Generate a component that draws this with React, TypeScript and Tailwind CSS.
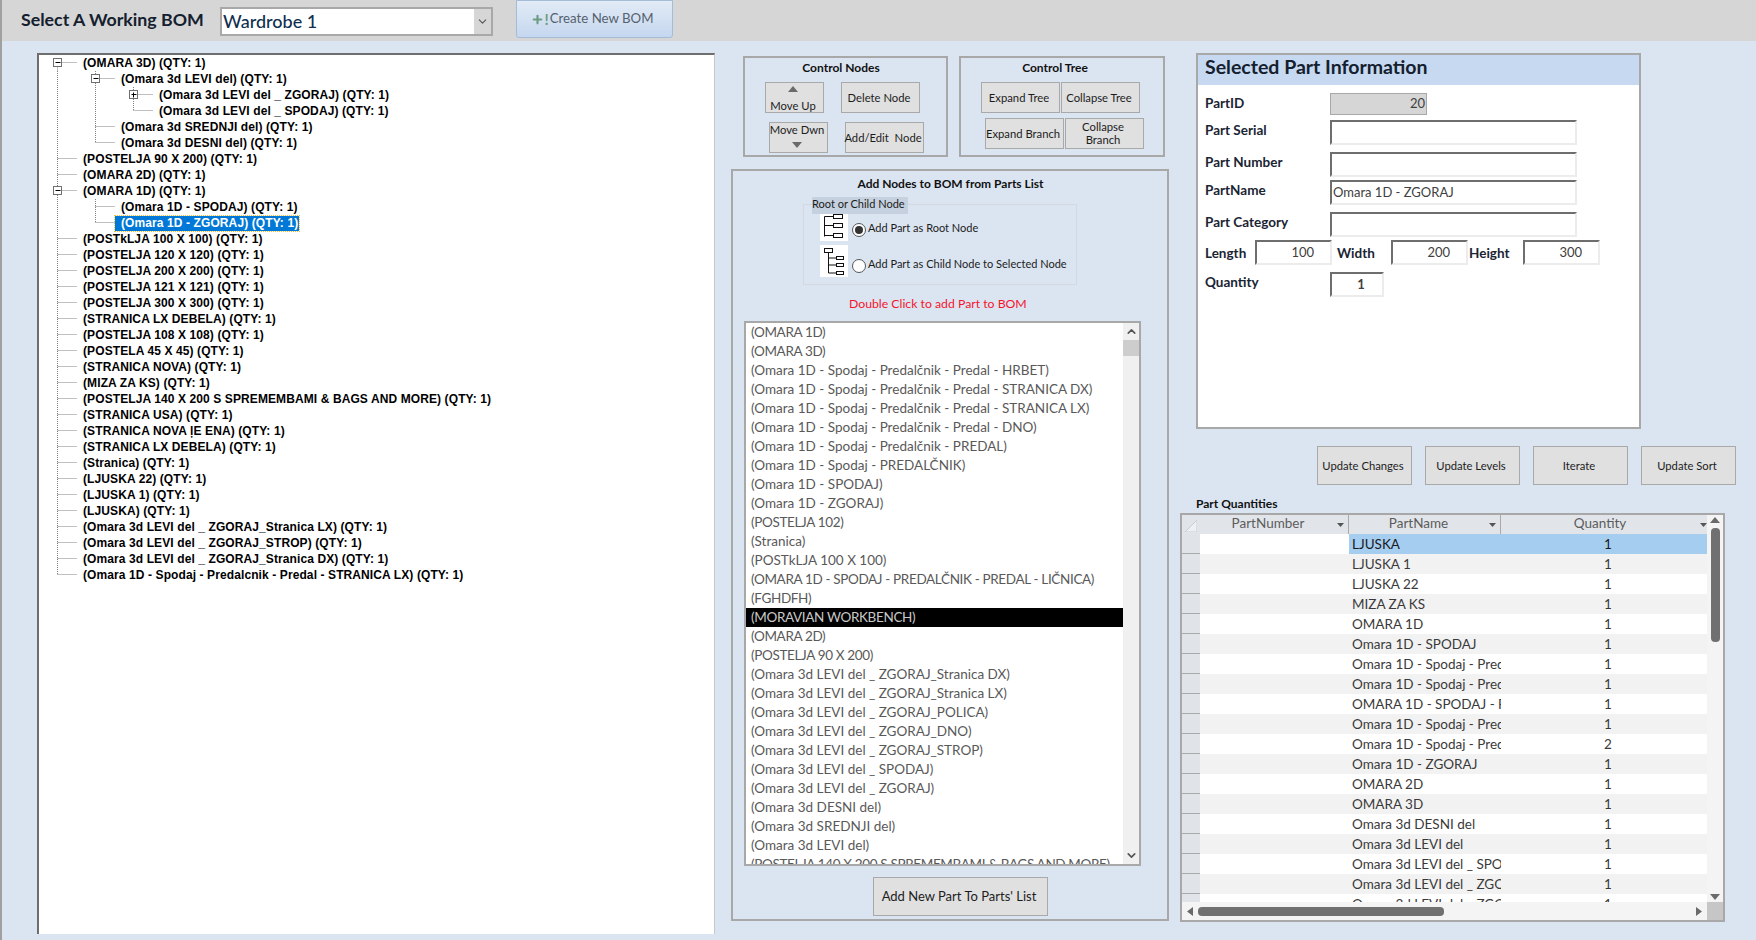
import { ChevronDown, ChevronUp, Plus } from 'lucide-react';
import type { ReactNode } from 'react';

type Guide = 'f' | 'u' | 'd' | null;
interface TreeRow {
    level: number;
    text: string;
    box?: 'minus' | 'plus';
    guides: Guide[];
    selected?: boolean;
}

const flat = (text: string, g: Guide = 'f'): TreeRow => ({ level: 0, text, guides: [g] });

const treeRows: TreeRow[] = [
    { level: 0, text: '(OMARA 3D) (QTY: 1)', box: 'minus', guides: ['d'] },
    { level: 1, text: '(Omara 3d LEVI del) (QTY: 1)', box: 'minus', guides: ['f', 'f'] },
    { level: 2, text: '(Omara 3d LEVI del _ ZGORAJ) (QTY: 1)', box: 'plus', guides: ['f', 'f', 'f'] },
    { level: 2, text: '(Omara 3d LEVI del _ SPODAJ) (QTY: 1)', guides: ['f', 'f', 'u'] },
    { level: 1, text: '(Omara 3d SREDNJI del) (QTY: 1)', guides: ['f', 'f'] },
    { level: 1, text: '(Omara 3d DESNI del) (QTY: 1)', guides: ['f', 'u'] },
    flat('(POSTELJA 90 X 200) (QTY: 1)'),
    flat('(OMARA 2D) (QTY: 1)'),
    { level: 0, text: '(OMARA 1D) (QTY: 1)', box: 'minus', guides: ['f'] },
    { level: 1, text: '(Omara 1D - SPODAJ) (QTY: 1)', guides: ['f', 'f'] },
    { level: 1, text: '(Omara 1D - ZGORAJ) (QTY: 1)', guides: ['f', 'u'], selected: true },
    flat('(POSTkLJA 100 X 100) (QTY: 1)'),
    flat('(POSTELJA 120 X 120) (QTY: 1)'),
    flat('(POSTELJA 200 X 200) (QTY: 1)'),
    flat('(POSTELJA 121 X 121) (QTY: 1)'),
    flat('(POSTELJA 300 X 300) (QTY: 1)'),
    flat('(STRANICA LX DEBELA) (QTY: 1)'),
    flat('(POSTELJA 108 X 108) (QTY: 1)'),
    flat('(POSTELA 45 X 45) (QTY: 1)'),
    flat('(STRANICA NOVA) (QTY: 1)'),
    flat('(MIZA ZA KS) (QTY: 1)'),
    flat('(POSTELJA 140 X 200 S SPREMEMBAMI & BAGS AND MORE) (QTY: 1)'),
    flat('(STRANICA USA) (QTY: 1)'),
    flat('(STRANICA NOVA ļE ENA) (QTY: 1)'),
    flat('(STRANICA LX DEBELA) (QTY: 1)'),
    flat('(Stranica) (QTY: 1)'),
    flat('(LJUSKA 22) (QTY: 1)'),
    flat('(LJUSKA 1) (QTY: 1)'),
    flat('(LJUSKA) (QTY: 1)'),
    flat('(Omara 3d LEVI del _ ZGORAJ_Stranica LX) (QTY: 1)'),
    flat('(Omara 3d LEVI del _ ZGORAJ_STROP) (QTY: 1)'),
    flat('(Omara 3d LEVI del _ ZGORAJ_Stranica DX) (QTY: 1)'),
    flat('(Omara 1D - Spodaj - Predalcnik - Predal - STRANICA LX) (QTY: 1)', 'u'),
];

const listItems = [
    '(OMARA 1D)',
    '(OMARA 3D)',
    '(Omara 1D - Spodaj - Predalčnik - Predal - HRBET)',
    '(Omara 1D - Spodaj - Predalčnik - Predal - STRANICA DX)',
    '(Omara 1D - Spodaj - Predalčnik - Predal - STRANICA LX)',
    '(Omara 1D - Spodaj - Predalčnik - Predal - DNO)',
    '(Omara 1D - Spodaj - Predalčnik - PREDAL)',
    '(Omara 1D - Spodaj - PREDALČNIK)',
    '(Omara 1D - SPODAJ)',
    '(Omara 1D - ZGORAJ)',
    '(POSTELJA 102)',
    '(Stranica)',
    '(POSTkLJA 100 X 100)',
    '(OMARA 1D - SPODAJ - PREDALČNIK - PREDAL - LIČNICA)',
    '(FGHDFH)',
    '(MORAVIAN WORKBENCH)',
    '(OMARA 2D)',
    '(POSTELJA 90 X 200)',
    '(Omara 3d LEVI del _ ZGORAJ_Stranica DX)',
    '(Omara 3d LEVI del _ ZGORAJ_Stranica LX)',
    '(Omara 3d LEVI del _ ZGORAJ_POLICA)',
    '(Omara 3d LEVI del _ ZGORAJ_DNO)',
    '(Omara 3d LEVI del _ ZGORAJ_STROP)',
    '(Omara 3d LEVI del _ SPODAJ)',
    '(Omara 3d LEVI del _ ZGORAJ)',
    '(Omara 3d DESNI del)',
    '(Omara 3d SREDNJI del)',
    '(Omara 3d LEVI del)',
    '(POSTELJA 140 X 200 S SPREMEMBAMI & BAGS AND MORE)',
];

const quantities: [string, number][] = [
    ['LJUSKA', 1],
    ['LJUSKA 1', 1],
    ['LJUSKA 22', 1],
    ['MIZA ZA KS', 1],
    ['OMARA 1D', 1],
    ['Omara 1D - SPODAJ', 1],
    ['Omara 1D - Spodaj - Predalčnik', 1],
    ['Omara 1D - Spodaj - Predalčnik', 1],
    ['OMARA 1D - SPODAJ - PREDALČNIK', 1],
    ['Omara 1D - Spodaj - Predalčnik', 1],
    ['Omara 1D - Spodaj - Predalčnik', 2],
    ['Omara 1D - ZGORAJ', 1],
    ['OMARA 2D', 1],
    ['OMARA 3D', 1],
    ['Omara 3d DESNI del', 1],
    ['Omara 3d LEVI del', 1],
    ['Omara 3d LEVI del _ SPODAJ', 1],
    ['Omara 3d LEVI del _ ZGORAJ', 1],
    ['Omara 3d LEVI del _ ZGORAJ', 1],
];

// connector drawing in front of a tree row
function TreePrefix({ row }: { row: TreeRow }) {
    const width = (row.level + 1) * 38;
    const cx = (i: number) => 18.5 + i * 38;
    const midY = 7.5;
    const own = cx(row.level);
    return (
        <svg width={width} height={16} className="shrink-0">
            {row.guides.map((g, i) => {
                if (!g) return null;
                const y1 = g === 'd' ? midY : 0;
                const y2 = g === 'u' ? midY : 16;
                return <line key={i} x1={cx(i)} x2={cx(i)} y1={y1} y2={y2} stroke="#808080" strokeDasharray="1 1" />;
            })}
            <line x1={own} x2={width} y1={midY} y2={midY} stroke="#808080" strokeDasharray="1 1" />
            {row.box && (
                <g>
                    <rect x={own - 4} y={midY - 4} width={8} height={8} fill="#fff" stroke="#707070" />
                    <line x1={own - 2} x2={own + 3} y1={midY} y2={midY} stroke="#000" />
                    {row.box === 'plus' && <line x1={own} x2={own} y1={midY - 2} y2={midY + 3} stroke="#000" />}
                </g>
            )}
        </svg>
    );
}

function GrayButton({ className, children }: { className: string; children: ReactNode }) {
    return (
        <button className={`bg-[#e0e0e0] border border-[#a9a9a9] text-[#1c1c1c] text-[11.25px] leading-[13px] whitespace-nowrap font-[Lato,sans-serif] flex flex-col items-center justify-center shrink-0 pr-[3px] ${className}`}>
            {children}
        </button>
    );
}

function Triangle({ down }: { down?: boolean }) {
    return (
        <svg width="10" height="6" viewBox="0 0 10 6" className="shrink-0">
            <path d={down ? 'M0 0H10L5 6Z' : 'M0 6H10L5 0Z'} fill="#6a6a6a" />
        </svg>
    );
}

function GroupBox({ className, children }: { className: string; children: ReactNode }) {
    return <div className={`border-2 border-[#a8a8a8] flex flex-col shrink-0 ${className}`}>{children}</div>;
}

function Field({ className, value, right }: { className: string; value?: string; right?: boolean }) {
    return (
        <div className={`border-2 border-t-[#6e6e6e] border-l-[#6e6e6e] border-r-[#ececec] border-b-[#ececec] bg-white text-[13px] text-[#404040] flex items-center shrink-0 ${right ? 'justify-end pr-[16px] pb-[2px]' : 'pl-[1px]'} ${className}`}>
            {value}
        </div>
    );
}

function PartRow({ label, className, value }: { label: string; className: string; value?: string }) {
    return (
        <div className={`flex items-center ${className}`}>
            <span className="w-[125px] text-[13.5px] leading-[16px] font-bold text-[#1a2433] mb-[5px]">{label}</span>
            <Field className="w-[247px] h-[25px]" value={value} />
        </div>
    );
}

function Header({ className, arrow, label }: { className: string; arrow: string; label: string }) {
    return (
        <div className={`relative flex items-center justify-center border-r border-[#a9a9a9] text-[13.5px] text-[#5c5c5c] shrink-0 pb-[2px] ${className}`}>
            {label}
            <svg width="7" height="4" viewBox="0 0 7 4" className={`absolute top-[8px] ${arrow}`}>
                <path d="M0 0H7L3.5 4Z" fill="#555" />
            </svg>
        </div>
    );
}

function RootIcon() {
    return (
        <svg width="28" height="32" viewBox="0 0 28 32" className="bg-white shrink-0">
            <g fill="none" stroke="#111" strokeWidth="1">
                <rect x="13.5" y="5.5" width="9" height="4" />
                <rect x="13.5" y="14.5" width="9" height="4" />
                <rect x="13.5" y="24.5" width="9" height="4" />
                <path d="M4.5 7.5V27.5M4.5 7.5H13M4.5 16.5H13M4.5 26.5H13" />
            </g>
        </svg>
    );
}

function ChildIcon() {
    return (
        <svg width="28" height="32" viewBox="0 0 28 32" className="bg-white shrink-0">
            <g fill="none" stroke="#111" strokeWidth="1">
                <rect x="4.5" y="3.5" width="8" height="4" />
                <rect x="16.5" y="11.5" width="7" height="3" />
                <rect x="16.5" y="18.5" width="7" height="3" />
                <rect x="16.5" y="26.5" width="7" height="3" />
                <path d="M8.5 8V28M8.5 13H16M8.5 20H16M8.5 28H16" />
            </g>
        </svg>
    );
}

export default function App() {
    return (
        <div className="w-[1756px] h-[940px] overflow-hidden bg-[#dbe5f1] border-l-2 border-[#a0a0a0] flex flex-col font-[Lato,sans-serif]">
            {/* top bar */}
            <div className="h-[41px] bg-[#d6d6d6] flex items-start shrink-0">
                <div className="ml-[19px] mt-[7px] w-[179px] text-[17.75px] leading-[24px] font-bold text-[#14202e] whitespace-nowrap">Select A Working BOM</div>
                <div className="ml-[20px] mt-[7px] w-[273px] h-[29px] border-2 border-[#a8a8a8] bg-white flex items-center">
                    <span className="flex-1 pl-[1px] text-[18px] font-medium text-[#10304f]">Wardrobe 1</span>
                    <div className="w-[17px] h-full bg-[#d6d6d6] flex items-center justify-center">
                        <ChevronDown size={13} className="text-[#555]" />
                    </div>
                </div>
                <button className="ml-[23px] w-[157px] h-[38px] rounded-b-[3px] border border-[#a4bcd8] bg-gradient-to-b from-[#e2ebf6] to-[#c5d7ef] flex items-center justify-center text-[13.25px] text-[#56616e] pr-[4px]">
                    <Plus size={13} strokeWidth={4} className="text-[#6d9c82]" />
                    <span className="font-bold text-[#6d9c82] text-[15px] leading-none mr-[1px]">!</span>
                    Create New BOM
                </button>
            </div>

            <div className="flex flex-1 min-h-0">
                {/* tree */}
                <div className="ml-[35px] mt-[12px] w-[678px] h-[881px] shrink-0 bg-white border-t-2 border-l-2 border-[#6e6e6e] border-r border-r-[#c8c8c8] font-['Liberation_Sans',sans-serif] font-bold text-[12px] text-black">
                    {treeRows.map((row, i) => (
                        <div key={i} className="flex items-center h-[16px] whitespace-nowrap">
                            <TreePrefix row={row} />
                            <span className={`pl-[6px] pr-[1px] leading-[15px] tracking-[0.1px] ${row.selected ? 'bg-[#0078d7] text-white outline-1 outline-dotted outline-[#f0c040]' : ''}`}>{row.text}</span>
                        </div>
                    ))}
                </div>

                {/* middle column */}
                <div className="ml-[16px] w-[438px] shrink-0 flex flex-col">
                    <div className="flex mt-[15px] ml-[12px] gap-[11px]">
                        <GroupBox className="w-[205px] h-[101px]">
                            <div className="h-[20px] flex items-center justify-center text-[12px] font-bold text-[#111] pr-[9px]">Control Nodes</div>
                            <div className="flex mt-[4px] ml-[20px] gap-[17px]">
                                <GrayButton className="w-[59px] h-[31px] !justify-between pt-[3px]">
                                    <Triangle />
                                    <span>Move Up</span>
                                </GrayButton>
                                <GrayButton className="w-[79px] h-[31px]">Delete Node</GrayButton>
                            </div>
                            <div className="flex mt-[9px] ml-[24px] gap-[17px]">
                                <GrayButton className="w-[59px] h-[31px] !justify-between pb-[4px]">
                                    <span>Move Dwn</span>
                                    <Triangle down />
                                </GrayButton>
                                <GrayButton className="w-[79px] h-[31px]">Add/Edit&nbsp; Node</GrayButton>
                            </div>
                        </GroupBox>
                        <GroupBox className="w-[206px] h-[101px]">
                            <div className="h-[20px] flex items-center justify-center text-[12px] font-bold text-[#111] pr-[14px]">Control Tree</div>
                            <div className="flex mt-[4px] ml-[20px] gap-[1px]">
                                <GrayButton className="w-[79px] h-[31px]">Expand Tree</GrayButton>
                                <GrayButton className="w-[79px] h-[31px]">Collapse Tree</GrayButton>
                            </div>
                            <div className="flex mt-[5px] ml-[24px] gap-[1px]">
                                <GrayButton className="w-[79px] h-[31px]">Expand Branch</GrayButton>
                                <GrayButton className="w-[79px] h-[31px] pb-[2px]">
                                    <span>Collapse</span>
                                    <span>Branch</span>
                                </GrayButton>
                            </div>
                        </GroupBox>
                    </div>

                    <GroupBox className="mt-[12px] w-[438px] h-[752px]">
                        <div className="h-[26px] flex items-center justify-center text-[12px] font-bold text-[#111] pl-[1px]">Add Nodes to BOM from Parts List</div>
                        <div className="relative mt-[7px] ml-[70px] w-[274px] h-[81px] border border-[#d3d9df] px-[16px] py-[4px] flex flex-col gap-[4px] text-[11px] text-[#1c1c1c]">
                            <div className="absolute left-[8px] -top-[8px] w-[96px] h-[17px] bg-[#c5d1de] flex items-center whitespace-nowrap pb-[2px]">Root or Child Node</div>
                            <div className="flex">
                                <RootIcon />
                                <div className="ml-[4px] flex items-center gap-[2px] h-[32px] pt-[6px] whitespace-nowrap">
                                    <span className="w-[14px] h-[14px] rounded-full border border-[#555] bg-white flex items-center justify-center mt-[3px]">
                                        <span className="w-[8px] h-[8px] rounded-full bg-[#333]" />
                                    </span>
                                    Add Part as Root Node
                                </div>
                            </div>
                            <div className="flex">
                                <ChildIcon />
                                <div className="ml-[4px] flex items-center gap-[2px] h-[32px] pt-[6px] whitespace-nowrap">
                                    <span className="w-[14px] h-[14px] rounded-full border border-[#555] bg-white mt-[3px]" />
                                    Add Part as Child Node to Selected Node
                                </div>
                            </div>
                        </div>
                        <div className="mt-[10px] ml-[116px] h-[19px] flex items-center text-[12.25px] text-[#f5142d]">Double Click to add Part to BOM</div>
                        <div className="mt-[7px] ml-[11px] w-[397px] h-[545px] border-2 border-[#a8a8a8] bg-white flex overflow-hidden">
                            <div className="w-[377px] overflow-hidden">
                                {listItems.map((item, i) => (
                                    <div key={i} className={`h-[19px] pl-[5px] flex items-center whitespace-nowrap text-[13.5px] ${item === item.toUpperCase() ? 'tracking-[-0.35px]' : ''} ${item.startsWith('(MORAVIAN') ? 'bg-black text-[#c8c8c8]' : 'text-[#595959]'}`}>
                                        {item}
                                    </div>
                                ))}
                            </div>
                            <div className="w-[16px] bg-[#f0f0f0] flex flex-col items-center justify-between py-[2px]">
                                <div className="flex flex-col items-center w-full">
                                    <ChevronUp size={13} strokeWidth={3} className="text-[#555]" />
                                    <div className="w-full h-[16px] mt-[2px] bg-[#cdcdcd]" />
                                </div>
                                <ChevronDown size={13} strokeWidth={3} className="text-[#555]" />
                            </div>
                        </div>
                        <GrayButton className="mt-[11px] ml-[140px] w-[175px] h-[39px] !text-[13px]">Add New Part To Parts' List</GrayButton>
                    </GroupBox>
                </div>

                {/* right column */}
                <div className="ml-[11px] w-[556px] shrink-0 flex flex-col">
                    <div className="mt-[12px] ml-[16px] w-[445px] h-[376px] shrink-0 border-2 border-[#a8a8a8] bg-white flex flex-col">
                        <div className="h-[30px] bg-[#c6d9f1] flex items-center pl-[7px] pb-[6px] text-[19.5px] font-bold text-[#14202e] shrink-0">Selected Part Information</div>
                        <div className="pl-[7px] flex flex-col">
                            <div className="flex items-center mt-[8px]">
                                <span className="w-[125px] text-[13.5px] leading-[16px] font-bold text-[#1a2433] mb-[2px]">PartID</span>
                                <div className="w-[97px] h-[22px] bg-[#d6d6d6] border border-[#a8a8a8] text-[13px] text-[#404040] flex items-center justify-end pr-[1px]">20</div>
                            </div>
                            <PartRow label="Part Serial" className="mt-[5px]" />
                            <PartRow label="Part Number" className="mt-[7px]" />
                            <PartRow label="PartName" className="mt-[3px]" value="Omara 1D - ZGORAJ" />
                            <PartRow label="Part Category" className="mt-[7px]" />
                            <div className="flex items-center mt-[3px] text-[13.5px] leading-[16px] font-bold text-[#1a2433]">
                                <span className="w-[50px]">Length</span>
                                <Field className="w-[77px] h-[25px] font-normal" value="100" right />
                                <span className="w-[54px] ml-[5px]">Width</span>
                                <Field className="w-[77px] h-[25px] font-normal" value="200" right />
                                <span className="w-[54px] ml-[1px]">Height</span>
                                <Field className="w-[77px] h-[25px] font-normal" value="300" right />
                            </div>
                            <div className="flex items-center mt-[7px]">
                                <span className="w-[125px] text-[13.5px] leading-[16px] font-bold text-[#1a2433] mb-[5px]">Quantity</span>
                                <Field className="w-[54px] h-[25px] justify-center font-bold !pl-[8px]" value="1" />
                            </div>
                        </div>
                    </div>

                    <div className="flex mt-[17px] ml-[137px] gap-[13px]">
                        <GrayButton className="w-[95px] h-[39px]">Update Changes</GrayButton>
                        <GrayButton className="w-[95px] h-[39px]">Update Levels</GrayButton>
                        <GrayButton className="w-[95px] h-[39px]">Iterate</GrayButton>
                        <GrayButton className="w-[95px] h-[39px]">Update Sort</GrayButton>
                    </div>

                    <div className="mt-[11px] ml-[16px] h-[16px] flex items-center text-[12px] font-bold text-[#111]">Part Quantities</div>

                    <div className="mt-[1px] w-[545px] h-[409px] border-2 border-[#a8a8a8] bg-white flex flex-col shrink-0">
                        <div className="flex flex-1 min-h-0">
                            <div className="w-[525px] overflow-hidden">
                                <div className="flex h-[19px] bg-[#e1e5ea]">
                                    <div className="w-[18px] shrink-0 flex items-end justify-center pb-[2px]">
                                        <svg width="12" height="12" viewBox="0 0 12 12">
                                            <path d="M0 12L12 0V12Z" fill="#eef0f3" stroke="#c9cdd3" />
                                        </svg>
                                    </div>
                                    <Header className="w-[149px] pr-[12px]" arrow="right-[4px]" label="PartNumber" />
                                    <Header className="w-[152px] pr-[12px]" arrow="right-[4px]" label="PartName" />
                                    <Header className="w-[206px] pr-[8px] !border-r-0" arrow="right-0" label="Quantity" />
                                </div>
                                {quantities.map(([name, qty], i) => (
                                    <div key={i} className={`flex h-[20px] text-[13.5px] text-[#3a3a3a] ${i % 2 ? 'bg-[#f2f2f2]' : 'bg-white'}`}>
                                        <div className="w-[18px] shrink-0 bg-[#e0e3e8] border-b border-[#a9a9a9]" />
                                        <div className="w-[149px] shrink-0" />
                                        <div className={`flex shrink-0 ${i === 0 ? 'bg-[#a4cdf0] text-[#1a1a1a]' : ''}`}>
                                            <div className="w-[152px] pl-[3px] flex items-center overflow-hidden whitespace-nowrap">{name}</div>
                                            <div className="w-[206px] pl-[8px] flex items-center justify-center">{qty}</div>
                                        </div>
                                    </div>
                                ))}
                            </div>
                            <div className="w-[16px] bg-[#f4f4f4] flex flex-col items-center justify-between py-[2px]">
                                <div className="flex flex-col items-center">
                                    <Triangle />
                                    <div className="w-[9px] h-[114px] rounded-[4px] bg-[#707070] mt-[5px]" />
                                </div>
                                <Triangle down />
                            </div>
                        </div>
                        <div className="h-[18px] flex shrink-0">
                            <div className="w-[525px] bg-[#f4f4f4] flex items-center pl-[5px] pr-[5px] justify-between">
                                <div className="flex items-center">
                                    <svg width="6" height="9" viewBox="0 0 6 9"><path d="M6 0V9L0 4.5Z" fill="#6a6a6a" /></svg>
                                    <div className="w-[246px] h-[9px] rounded-[4px] bg-[#707070] ml-[5px]" />
                                </div>
                                <svg width="6" height="9" viewBox="0 0 6 9"><path d="M0 0V9L6 4.5Z" fill="#6a6a6a" /></svg>
                            </div>
                            <div className="flex-1 bg-[#c6c6c6]" />
                        </div>
                    </div>
                </div>
            </div>
        </div>
    );
}
